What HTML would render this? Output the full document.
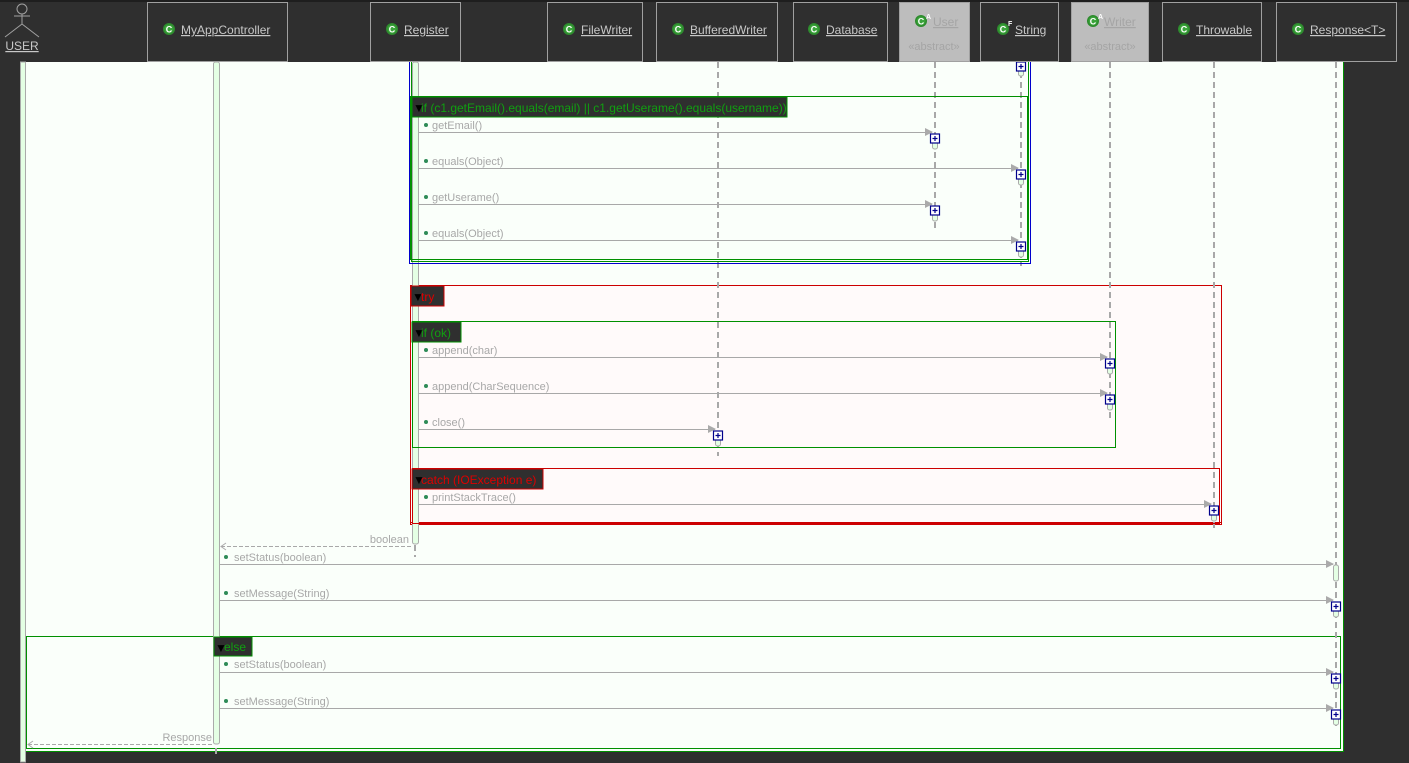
<!DOCTYPE html>
<html><head><meta charset="utf-8"><style>
html,body{margin:0;padding:0;background:#2f2f2f;width:1409px;height:763px;overflow:hidden}
svg{display:block;font-family:"Liberation Sans",sans-serif}
.m{font-size:11px;fill:#a8a8a8}
.h{font-size:12px;fill:#c8c8c8;text-decoration:underline}
.l{stroke:#a8a8a8;stroke-width:1}
.d{stroke:#a8a8a8;stroke-width:2;stroke-dasharray:6,4}
.g{fill:none;stroke:#009000;stroke-width:1}
.r{fill:none;stroke:#cc0000;stroke-width:1}
.b{fill:none;stroke:#0000cc;stroke-width:1}
</style></head><body>
<svg width="1409" height="763" viewBox="0 0 1409 763">
<defs>
<g id="plus"><rect x="-4.5" y="0" width="9" height="9" fill="#fff" stroke="#00008b" stroke-width="1.2"/><path d="M-2.5 4.5h5M0 2v5" stroke="#00008b" stroke-width="1.2"/></g>
<g id="ic"><circle r="6" fill="#2e8b2e"/><circle r="4.5" fill="#3aa33a"/><text x="0" y="3.5" text-anchor="middle" font-size="9" font-weight="bold" fill="#fff">C</text></g>
<polygon id="ah" points="0,0 -8,-4 -8,4" fill="#aaa"/>
</defs>
<rect x="0" y="0" width="1409" height="763" fill="#2f2f2f"/>
<rect x="20" y="62" width="1324" height="690" fill="#fafffa"/>
<!-- try region bg -->
<rect x="410.5" y="285.5" width="811" height="239" fill="#fffafa" stroke="#cc0000"/>
<line x1="411" y1="522.5" x2="1221" y2="522.5" stroke="#cc0000"/>
<!-- outer frame -->
<path d="M24.5 62V751.5H1343.5V62" class="g"/>
<rect x="26.5" y="636.5" width="1314" height="112" class="g"/>
<!-- lifelines -->
<line x1="718" y1="62" x2="718" y2="456" class="d"/>
<line x1="935" y1="62" x2="935" y2="232" class="d"/>
<line x1="1021" y1="62" x2="1021" y2="266" class="d"/>
<line x1="1110" y1="62" x2="1110" y2="420" class="d"/>
<line x1="1214" y1="62" x2="1214" y2="532" class="d"/>
<line x1="1336" y1="62" x2="1336" y2="726" class="d"/>
<line x1="415" y1="545" x2="415" y2="557" class="d"/>
<line x1="216" y1="748" x2="216" y2="757" class="d"/>
<!-- activation bars -->
<rect x="20.5" y="62" width="5" height="700" fill="#e4ffe4" stroke="#aaa"/>
<rect x="213.5" y="62" width="6" height="682" rx="2" fill="#e4ffe4" stroke="#aaa"/>
<rect x="412.5" y="62" width="6" height="482" rx="2" fill="#e4ffe4" stroke="#aaa"/>
<!-- blue / green frames upper -->
<path d="M409.5 62V263.5H1030.5V62" class="b"/>
<path d="M411.5 62V261.5H1028.5V62" class="g"/>
<rect x="410.5" y="96.5" width="617" height="163" class="g"/>
<rect x="412.5" y="321.5" width="703" height="126" class="g"/>
<rect x="412.5" y="468.5" width="807" height="55" class="r"/>
<!-- frame labels -->
<g font-size="12">
<rect x="412" y="97" width="375" height="20" fill="#2f2f2f" stroke="#009000"/><text x="413" y="112" fill="#000">▼</text><text x="421" y="112" fill="#10a010">if (c1.getEmail().equals(email) || c1.getUserame().equals(username))</text>
<rect x="411" y="286" width="33" height="20" fill="#2f2f2f" stroke="#cc0000"/><text x="412" y="301" fill="#000">▼</text><text x="421" y="301" fill="#dd0000">try</text>
<rect x="412" y="322" width="49" height="20" fill="#2f2f2f" stroke="#009000"/><text x="413" y="337" fill="#000">▼</text><text x="421" y="337" fill="#10a010">if (ok)</text>
<rect x="412" y="469" width="131" height="20" fill="#2f2f2f" stroke="#cc0000"/><text x="413" y="484" fill="#000">▼</text><text x="421" y="484" fill="#dd0000">catch (IOException e)</text>
<rect x="214" y="637" width="38" height="19" fill="#2f2f2f" stroke="#009000"/><text x="215" y="652" fill="#000">▼</text><text x="224" y="651" fill="#10a010">else</text>
</g>
<!-- messages -->
<g class="m">
<g fill="#2e8b57"><circle cx="426" cy="125" r="2"/><circle cx="426" cy="161" r="2"/><circle cx="426" cy="197" r="2"/><circle cx="426" cy="233" r="2"/><circle cx="426" cy="350" r="2"/><circle cx="426" cy="386" r="2"/><circle cx="426" cy="422" r="2"/><circle cx="426" cy="497" r="2"/><circle cx="226" cy="557" r="2"/><circle cx="226" cy="593" r="2"/><circle cx="226" cy="664" r="2"/><circle cx="226" cy="701" r="2"/></g>
<text x="432" y="129">getEmail()</text>
<text x="432" y="165">equals(Object)</text>
<text x="432" y="201">getUserame()</text>
<text x="432" y="237">equals(Object)</text>
<text x="432" y="354">append(char)</text>
<text x="432" y="390">append(CharSequence)</text>
<text x="432" y="426">close()</text>
<text x="432" y="501">printStackTrace()</text>
<text x="409" y="543" text-anchor="end">boolean</text>
<text x="234" y="561">setStatus(boolean)</text>
<text x="234" y="597">setMessage(String)</text>
<text x="234" y="668">setStatus(boolean)</text>
<text x="234" y="705">setMessage(String)</text>
<text x="212" y="741" text-anchor="end">Response</text>
</g>
<g class="l">
<line x1="419" y1="132.5" x2="932" y2="132.5"/><line x1="419" y1="168.5" x2="1018" y2="168.5"/>
<line x1="419" y1="204.5" x2="932" y2="204.5"/><line x1="419" y1="240.5" x2="1018" y2="240.5"/>
<line x1="419" y1="357.5" x2="1107" y2="357.5"/><line x1="419" y1="393.5" x2="1107" y2="393.5"/>
<line x1="419" y1="429.5" x2="715" y2="429.5"/><line x1="419" y1="504.5" x2="1211" y2="504.5"/>
<line x1="220" y1="564.5" x2="1333" y2="564.5"/><line x1="220" y1="600.5" x2="1333" y2="600.5"/>
<line x1="220" y1="672.5" x2="1333" y2="672.5"/><line x1="220" y1="708.5" x2="1333" y2="708.5"/>
<line x1="221" y1="546.5" x2="412" y2="546.5" stroke-dasharray="4,2"/>
<line x1="28" y1="744.5" x2="213" y2="744.5" stroke-dasharray="4,2"/>
</g>
<path d="M226 543l-5 3.5 5 3.5M33 741l-5 3.5 5 3.5" fill="none" stroke="#aaa"/>
<use href="#ah" x="933" y="132"/><use href="#ah" x="1019" y="168"/><use href="#ah" x="933" y="204"/><use href="#ah" x="1019" y="240"/>
<use href="#ah" x="1108" y="357"/><use href="#ah" x="1108" y="393"/><use href="#ah" x="716" y="429"/><use href="#ah" x="1212" y="504"/>
<use href="#ah" x="1334" y="564"/><use href="#ah" x="1334" y="600"/><use href="#ah" x="1334" y="672"/><use href="#ah" x="1334" y="708"/>
<!-- small activations -->
<g fill="#e4ffe4" stroke="#aaa">
<rect x="1018.5" y="64" width="5" height="12" rx="2"/><rect x="932.5" y="134" width="5" height="15" rx="2"/><rect x="1018.5" y="170" width="5" height="15" rx="2"/><rect x="932.5" y="206" width="5" height="15" rx="2"/><rect x="1018.5" y="242" width="5" height="15" rx="2"/>
<rect x="1107.5" y="359" width="5" height="15" rx="2"/><rect x="1107.5" y="395" width="5" height="15" rx="2"/><rect x="715.5" y="431" width="5" height="15" rx="2"/><rect x="1211.5" y="506" width="5" height="15" rx="2"/>
<rect x="1333.5" y="565" width="5" height="16" rx="2"/><rect x="1333.5" y="602" width="5" height="15" rx="2"/><rect x="1333.5" y="674" width="5" height="15" rx="2"/><rect x="1333.5" y="710" width="5" height="15" rx="2"/>
</g>
<use href="#plus" x="1021" y="62"/><use href="#plus" x="935" y="134"/><use href="#plus" x="1021" y="170"/><use href="#plus" x="935" y="206"/><use href="#plus" x="1021" y="242"/>
<use href="#plus" x="1110" y="359"/><use href="#plus" x="1110" y="395"/><use href="#plus" x="718" y="431"/><use href="#plus" x="1214" y="506"/>
<use href="#plus" x="1336" y="602"/><use href="#plus" x="1336" y="674"/><use href="#plus" x="1336" y="710"/>
<!-- header -->
<rect x="0" y="0" width="1409" height="2" fill="#1e1e1e"/>
<g fill="none" stroke="#a0a0a0" stroke-width="1">
<circle cx="22" cy="9" r="5"/><path d="M22 14v10M14 16h16M22 24l-17 13M22 24l17 13"/>
</g>
<text x="22" y="50" text-anchor="middle" class="h">USER</text>
<g stroke="#a0a0a0" fill="#2f2f2f">
<rect x="147.5" y="2.5" width="140" height="59"/><rect x="370.5" y="2.5" width="90" height="59"/>
<rect x="547.5" y="2.5" width="95" height="59"/><rect x="656.5" y="2.5" width="121" height="59"/>
<rect x="793.5" y="2.5" width="94" height="59"/><rect x="899.5" y="2.5" width="70" height="59" fill="#bdbdbd"/>
<rect x="980.5" y="2.5" width="78" height="59"/><rect x="1071.5" y="2.5" width="77" height="59" fill="#bdbdbd"/>
<rect x="1162.5" y="2.5" width="99" height="59"/><rect x="1276.5" y="2.5" width="120" height="59"/>
</g>
<use href="#ic" x="169" y="29"/><text x="181" y="34" class="h">MyAppController</text>
<use href="#ic" x="392" y="29"/><text x="404" y="34" class="h">Register</text>
<use href="#ic" x="569" y="29"/><text x="581" y="34" class="h">FileWriter</text>
<use href="#ic" x="678" y="29"/><text x="690" y="34" class="h">BufferedWriter</text>
<use href="#ic" x="814" y="29"/><text x="826" y="34" class="h">Database</text>
<use href="#ic" x="921" y="21"/><text x="926" y="19" font-size="7" fill="#fff" font-weight="bold">A</text><text x="933" y="26" class="h" style="fill:#a5a5a5">User</text>
<text x="934" y="50" text-anchor="middle" font-size="11" fill="#a5a5a5">«abstract»</text>
<use href="#ic" x="1003" y="29"/><text x="1008" y="26" font-size="7" fill="#fff" font-weight="bold">F</text><text x="1015" y="34" class="h">String</text>
<use href="#ic" x="1093" y="21"/><text x="1098" y="19" font-size="7" fill="#fff" font-weight="bold">A</text><text x="1104" y="26" class="h" style="fill:#a5a5a5">Writer</text>
<text x="1110" y="50" text-anchor="middle" font-size="11" fill="#a5a5a5">«abstract»</text>
<use href="#ic" x="1184" y="29"/><text x="1196" y="34" class="h">Throwable</text>
<use href="#ic" x="1298" y="29"/><text x="1310" y="34" class="h">Response&lt;T&gt;</text>
</svg>
</body></html>
